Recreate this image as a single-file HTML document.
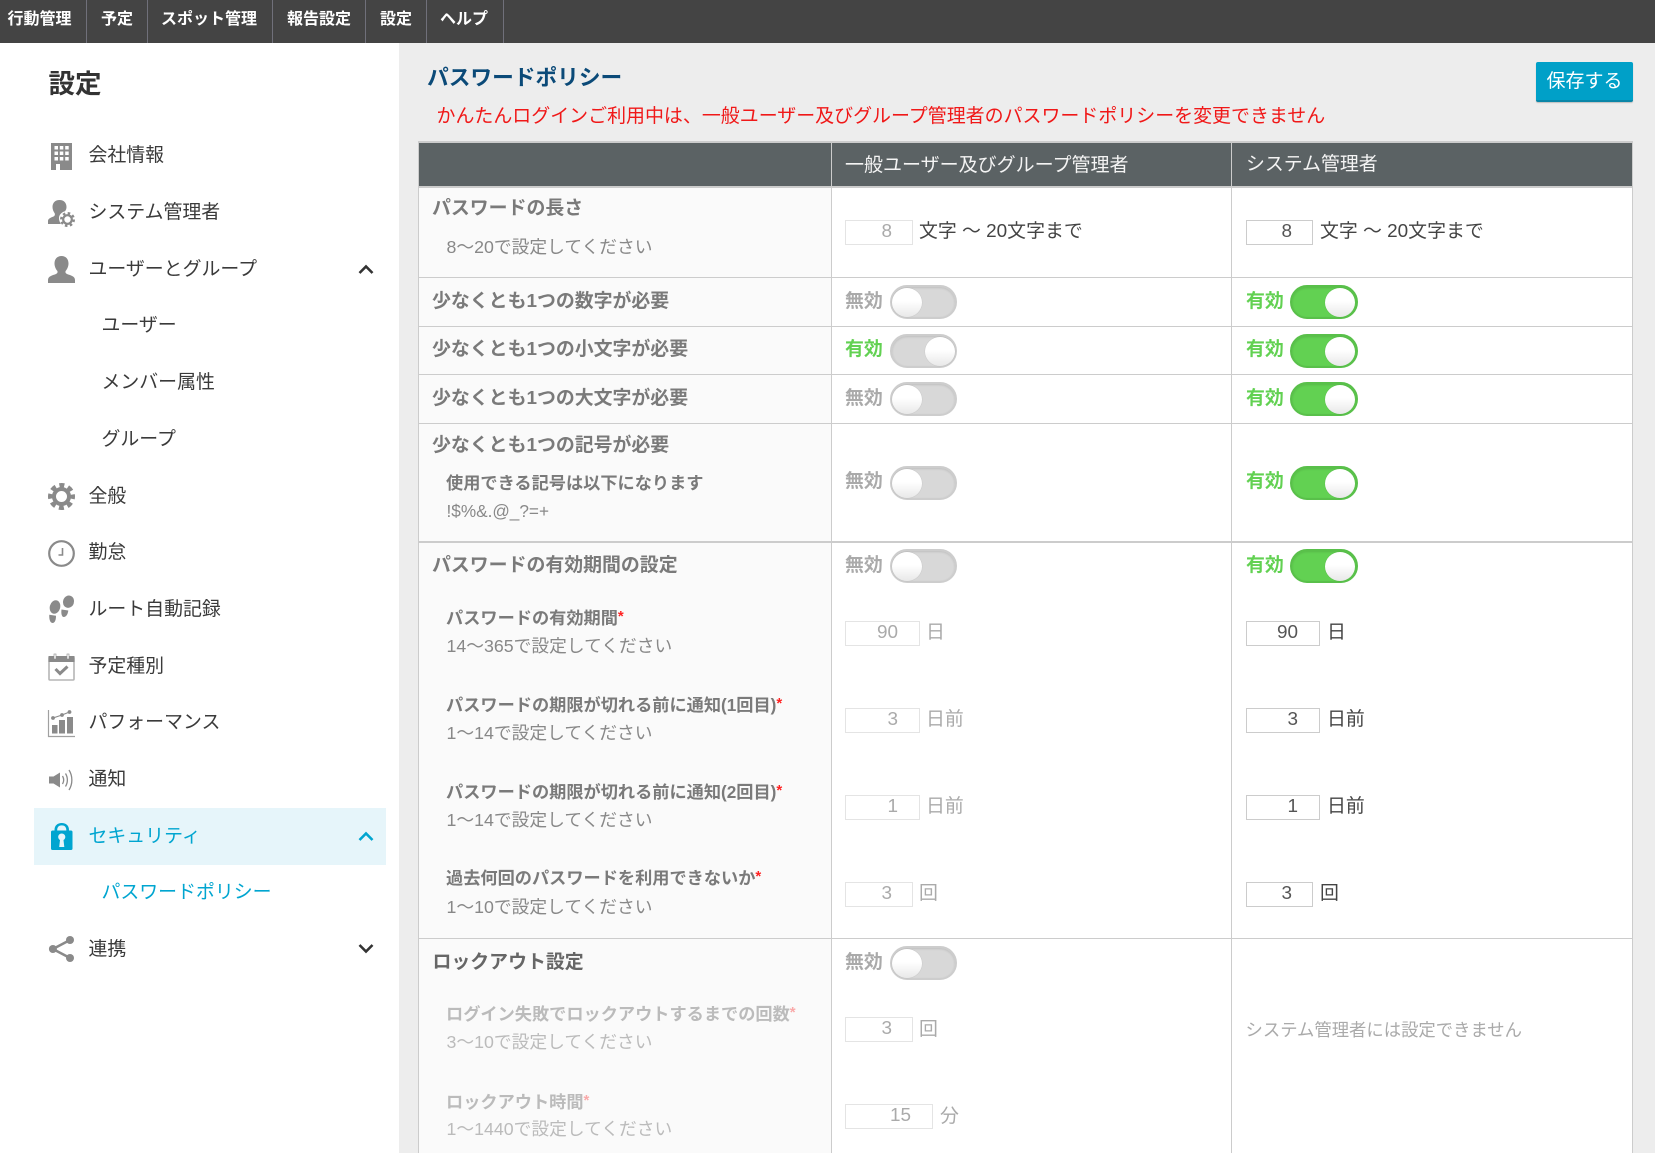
<!DOCTYPE html>
<html lang="ja"><head><meta charset="utf-8"><title>パスワードポリシー</title>
<style>
html,body{margin:0;padding:0;width:1655px;height:1153px;overflow:hidden;background:#ededed}
body{position:relative;font-family:"Liberation Sans","Noto Sans CJK JP",sans-serif;color:#333}
.t{position:absolute;white-space:nowrap;line-height:1;font-size:18.9px;transform:translateY(2px)}
.b{position:absolute}
.n{color:#fff;font-weight:700;font-size:16px;top:11px;transform:translateY(1px)}
.m{font-size:18.9px;color:#3a3a3a;left:88.500px}
.s{left:101.500px}
.l{font-weight:700;color:#7a7a7a;left:432px}
.h{font-weight:700;color:#7a7a7a;left:446px;font-size:17.2px;transform:translateY(1px)}
.d{color:#888;left:446.500px;font-size:17.75px;transform:none}
.off{color:#bbb!important}
.h i{color:#f22;font-style:normal;font-size:15px;position:relative;top:-3px}
.h.off i{color:#f9a9a9}
.v{font-weight:700;color:#aaa}
.g{font-weight:700;color:#62d152}
.u{color:#444}
.ud{color:#aaa}
.in{position:absolute;box-sizing:border-box;height:25px;background:#fff;border:1px solid #ccc;color:#555;font-size:18.9px;line-height:22px;text-align:right;font-family:"Liberation Sans",sans-serif}
.in.x{border:1px solid #e4e4e4;color:#aaa}
.tg{position:absolute;box-sizing:border-box;width:67px;height:34px;border-radius:17px;background:#d8d8d8;border:2px solid #cdcdcd;box-shadow:inset 0 1px 2px rgba(0,0,0,.12)}
.tg.on{width:68px;background:#62d152;border-color:#59c04a}
.tg b{position:absolute;display:block;width:30px;height:29px;top:.5px;left:0;border-radius:50%;background:linear-gradient(#fff 45%,#e8e8e8);box-shadow:0 0 1px rgba(0,0,0,.2)}
.tg.r b{left:33px}
svg{position:absolute;overflow:visible}
</style></head><body>

<!-- top bar -->
<div class="b" style="left:0;top:0;width:1655px;height:43px;background:#444"></div>
<div class="b" style="left:86px;top:0;width:1px;height:43px;background:#70707a"></div>
<div class="b" style="left:147px;top:0;width:1px;height:43px;background:#70707a"></div>
<div class="b" style="left:272px;top:0;width:1px;height:43px;background:#70707a"></div>
<div class="b" style="left:365px;top:0;width:1px;height:43px;background:#70707a"></div>
<div class="b" style="left:426px;top:0;width:1px;height:43px;background:#70707a"></div>
<div class="b" style="left:503px;top:0;width:1px;height:43px;background:#70707a"></div>
<div class="t n" style="left:7.500px">行動管理</div>
<div class="t n" style="left:101px">予定</div>
<div class="t n" style="left:161px">スポット管理</div>
<div class="t n" style="left:287px">報告設定</div>
<div class="t n" style="left:380px">設定</div>
<div class="t n" style="left:440px">ヘルプ</div>

<!-- sidebar -->
<div class="b" style="left:0;top:43px;width:399px;height:1110px;background:#fff"></div>
<div class="t" style="left:48.500px;top:69px;font-size:26.500px;font-weight:700;color:#333">設定</div>
<div class="b" style="left:34px;top:808px;width:352px;height:57px;background:#e6f5fa"></div>

<div class="t m" style="top:145px">会社情報</div>
<div class="t m" style="top:202px">システム管理者</div>
<div class="t m" style="top:259px">ユーザーとグループ</div>
<div class="t m s" style="top:315px">ユーザー</div>
<div class="t m s" style="top:372px">メンバー属性</div>
<div class="t m s" style="top:429px">グループ</div>
<div class="t m" style="top:486px">全般</div>
<div class="t m" style="top:542px">勤怠</div>
<div class="t m" style="top:599px">ルート自動記録</div>
<div class="t m" style="top:656px">予定種別</div>
<div class="t m" style="top:712px">パフォーマンス</div>
<div class="t m" style="top:769px">通知</div>
<div class="t m" style="top:826px;color:#00a5d0">セキュリティ</div>
<div class="t m s" style="top:882px;color:#00a5d0">パスワードポリシー</div>
<div class="t m" style="top:939px">連携</div>

<!-- sidebar icons -->
<svg style="left:51px;top:143px" width="21" height="27" viewBox="0 0 21 27"><path fill="#8a8a8a" fill-rule="evenodd" d="M0 0H21V27H9V21H5V27H0ZM3.500 3V6.500H7V3ZM8.800 3V6.500H12.300V3ZM14.200 3V6.500H17.700V3ZM3.500 8.500V12H7V8.500ZM8.800 8.500V12H12.300V8.500ZM14.200 8.500V12H17.700V8.500ZM3.500 14V17.500H7V14ZM8.800 14V17.500H12.300V14ZM14.200 14V17.500H17.700V14Z"/></svg>

<svg style="left:48px;top:200px" width="27" height="27" viewBox="0 0 27 27"><path fill="#8a8a8a" d="M11.500 0C16 0 18.500 3 18.500 7C18.500 8.500 18 10 17 11.200C13.500 12 11 15 11 18C11 20 11.500 22 13 24H0V21C0 18.500 3 17.500 5.500 16.500C7 15.800 7 14.500 6.800 13.500C5.500 11.500 4.500 9.500 4.500 7C4.500 3 7 0 11.500 0Z"/><g fill="none" stroke="#8a8a8a"><circle cx="19.500" cy="19.500" r="4.300" stroke-width="2.200"/><circle cx="19.500" cy="19.500" r="6.300" stroke-width="2.400" stroke-dasharray="2.500 2.450"/></g></svg>

<svg style="left:48px;top:256px" width="27" height="27" viewBox="0 0 27 27"><path fill="#8a8a8a" d="M13.500 0C18 0 20.500 3.200 20.500 7.500C20.500 10.500 19.200 13 17.800 14.800C17 16 17.500 17.300 19 18C22 19.300 27 20 27 24V27H0V24C0 20 5 19.300 8 18C9.500 17.300 10 16 9.200 14.800C7.800 13 6.500 10.500 6.500 7.500C6.500 3.200 9 0 13.500 0Z"/></svg>

<svg style="left:358px;top:263px" width="16" height="12" viewBox="0 0 16 12"><path d="M1.500 10L8 3.500L14.500 10" fill="none" stroke="#333" stroke-width="2.600"/></svg>

<svg style="left:48px;top:483px" width="27" height="27" viewBox="0 0 27 27"><g fill="none" stroke="#8a8a8a"><circle cx="13.500" cy="13.500" r="7.500" stroke-width="4"/><circle cx="13.500" cy="13.500" r="11.300" stroke-width="4.400" stroke-dasharray="5 3.875" stroke-dashoffset="2.500"/></g></svg>

<svg style="left:48px;top:540px" width="27" height="27" viewBox="0 0 27 27"><circle cx="13.500" cy="13.500" r="12.300" fill="none" stroke="#8a8a8a" stroke-width="2.200"/><path d="M14.500 8V15H10.500" fill="none" stroke="#8a8a8a" stroke-width="1.600"/></svg>

<svg style="left:49px;top:596px" width="26" height="27" viewBox="0 0 26 27"><g fill="#8a8a8a"><ellipse cx="6" cy="11" rx="5.200" ry="6.800" transform="rotate(15 6 11)"/><path d="M.3 18.800L7 19.800C7 24 6 27 3.500 27C1 27 0 23 .3 18.800Z"/><ellipse cx="19.500" cy="5.700" rx="5.500" ry="6.200" transform="rotate(20 19.500 5.700)"/><path d="M12.500 13.500L19.300 14.500C18.800 18.500 17 21 14.800 21C12.500 21 12 17 12.500 13.500Z"/></g></svg>

<svg style="left:48px;top:654px" width="27" height="27" viewBox="0 0 27 27"><rect x="1" y="3" width="25" height="23" rx="1" fill="#fff" stroke="#b5b5b5" stroke-width="1.600"/><rect x="0.500" y="2" width="26" height="6" fill="#8a8a8a"/><rect x="6" y="0" width="2" height="5" fill="#fff" stroke="#8a8a8a" stroke-width=".6"/><rect x="19" y="0" width="2" height="5" fill="#fff" stroke="#8a8a8a" stroke-width=".6"/><path d="M7.500 15L12 19.500L19.500 12.500" fill="none" stroke="#8a8a8a" stroke-width="3"/></svg>

<svg style="left:48px;top:710px" width="27" height="27" viewBox="0 0 27 27"><path d="M.5 0V26.500H27" fill="none" stroke="#a0a0a0" stroke-width="1.200"/><g fill="#8a8a8a"><rect x="4" y="15" width="5.500" height="8.500"/><rect x="11" y="10" width="6" height="13.500"/><rect x="19" y="7" width="6" height="16.500"/><circle cx="5" cy="8" r="1.900"/><circle cx="14" cy="5" r="1.900"/><circle cx="21.500" cy="2" r="1.900"/></g><path d="M5 8L14 5L21.500 2" fill="none" stroke="#8a8a8a" stroke-width="1.100"/></svg>

<svg style="left:49px;top:769px" width="25" height="22" viewBox="0 0 25 22"><path fill="#8a8a8a" d="M0 7.500H4.500L11 3.500V18.500L4.500 14.500H0Z"/><g fill="none" stroke="#8a8a8a" stroke-width="1.300"><path d="M13.500 7C15 9.500 15 12.500 13.500 15"/><path d="M16.500 4.500C19 8.500 19 13.500 16.500 17.500"/><path d="M20 1C23.800 7 23.800 15 20 21"/></g></svg>

<svg style="left:51px;top:823px" width="22" height="27" viewBox="0 0 22 27"><path fill="#00a5d0" fill-rule="evenodd" d="M3.500 7.500V7C3.500 2.500 6.500 0 10.700 0C15 0 18 2.500 18 7V7.500H20C21 7.500 21.500 8.200 21.500 9V25.500C21.500 26.400 21 27 20 27H1.500C.6 27 0 26.400 0 25.500V9C0 8.200 .6 7.500 1.500 7.500ZM6.200 7.500H15.300V7C15.300 4 13.500 2.400 10.700 2.400C8 2.400 6.200 4 6.200 7ZM10.700 10.500C8.700 10.500 7.200 12 7.200 14C7.200 15.300 7.900 16.400 9 17L8.200 24H13.300L12.500 17C13.600 16.400 14.300 15.300 14.300 14C14.300 12 12.700 10.500 10.700 10.500Z"/></svg>
<svg style="left:358px;top:830px" width="16" height="12" viewBox="0 0 16 12"><path d="M1.500 10L8 3.500L14.500 10" fill="none" stroke="#00a5d0" stroke-width="2.600"/></svg>

<svg style="left:49px;top:936px" width="25" height="26" viewBox="0 0 25 26"><g fill="#8a8a8a"><circle cx="3.900" cy="13" r="4"/><circle cx="21" cy="4" r="4"/><circle cx="21" cy="22" r="4"/></g><path d="M3.900 13L21 4M3.900 13L21 22" stroke="#8a8a8a" stroke-width="2.500"/></svg>
<svg style="left:358px;top:943px" width="16" height="12" viewBox="0 0 16 12"><path d="M1.500 2L8 8.500L14.500 2" fill="none" stroke="#333" stroke-width="2.600"/></svg>

<!-- main header -->
<div class="t" style="left:427px;top:64.500px;font-size:21.700px;font-weight:700;color:#0b4a78">パスワードポリシー</div>
<div class="t" style="left:436.500px;top:106px;font-size:18.970px;color:#f01818">かんたんログインご利用中は、一般ユーザー及びグループ管理者のパスワードポリシーを変更できません</div>
<div class="b" style="left:1536px;top:62px;width:97px;height:40px;box-sizing:border-box;background:#00a0c8;border-radius:2px;border-bottom:2px solid #0a86a8;box-shadow:0 1px 1px rgba(0,0,0,.2);color:#fff;font-size:19px;line-height:39px;text-align:center">保存する</div>

<!-- table -->
<div class="b" style="left:418px;top:141px;width:1215px;height:1012px;background:#fff"></div>
<div class="b" style="left:418px;top:188px;width:413px;height:965px;background:#fafafa"></div>
<div class="b" style="left:418px;top:143px;width:1214px;height:43px;background:#5b6264"></div>
<div class="b" style="left:418px;top:141px;width:1215px;height:2px;background:#ccc"></div>
<div class="b" style="left:418px;top:186px;width:1215px;height:2px;background:#ccc"></div>
<div class="b" style="left:418px;top:277px;width:1215px;height:1px;background:#ccc"></div>
<div class="b" style="left:418px;top:326px;width:1215px;height:1px;background:#ccc"></div>
<div class="b" style="left:418px;top:374px;width:1215px;height:1px;background:#ccc"></div>
<div class="b" style="left:418px;top:423px;width:1215px;height:1px;background:#ccc"></div>
<div class="b" style="left:418px;top:541px;width:1215px;height:2px;background:#ccc"></div>
<div class="b" style="left:418px;top:938px;width:1215px;height:1px;background:#ccc"></div>
<div class="b" style="left:418px;top:141px;width:1px;height:1012px;background:#ccc"></div>
<div class="b" style="left:831px;top:143px;width:1px;height:1010px;background:#ccc"></div>
<div class="b" style="left:1231px;top:143px;width:1px;height:1010px;background:#ccc"></div>
<div class="b" style="left:1632px;top:141px;width:1px;height:1012px;background:#ccc"></div>

<div class="t" style="left:845px;top:154px;font-size:19px;color:#f4f4f4">一般ユーザー及びグループ管理者</div>
<div class="t" style="left:1246px;top:154px;color:#f4f4f4">システム管理者</div>

<!-- row 1 -->
<div class="t l" style="top:198px">パスワードの長さ</div>
<div class="t d" style="top:238.500px">8～20で設定してください</div>
<div class="in x" style="left:845px;top:220px;width:68px;padding-right:20px">8</div>
<div class="t u" style="left:919px;top:221px">文字 ～ 20文字まで</div>
<div class="in" style="left:1246px;top:220px;width:67px;padding-right:20px">8</div>
<div class="t u" style="left:1320px;top:221px">文字 ～ 20文字まで</div>

<!-- row 2 -->
<div class="t l" style="top:291px">少なくとも1つの数字が必要</div>
<div class="t v" style="left:845px;top:291px">無効</div><div class="tg" style="left:890px;top:285px"><b></b></div>
<div class="t g" style="left:1246px;top:291px">有効</div><div class="tg on r" style="left:1290px;top:285px"><b></b></div>

<!-- row 3 -->
<div class="t l" style="top:339px">少なくとも1つの小文字が必要</div>
<div class="t g" style="left:845px;top:339px">有効</div><div class="tg r" style="left:890px;top:334px"><b></b></div>
<div class="t g" style="left:1246px;top:339px">有効</div><div class="tg on r" style="left:1290px;top:334px"><b></b></div>

<!-- row 4 -->
<div class="t l" style="top:388px">少なくとも1つの大文字が必要</div>
<div class="t v" style="left:845px;top:388px">無効</div><div class="tg" style="left:890px;top:382px"><b></b></div>
<div class="t g" style="left:1246px;top:388px">有効</div><div class="tg on r" style="left:1290px;top:382px"><b></b></div>

<!-- row 5 -->
<div class="t l" style="top:435px">少なくとも1つの記号が必要</div>
<div class="t h" style="top:474px">使用できる記号は以下になります</div>
<div class="t d" style="top:503px;font-size:17.2px">!$%&amp;.@_?=+</div>
<div class="t v" style="left:845px;top:471px">無効</div><div class="tg" style="left:890px;top:466px"><b></b></div>
<div class="t g" style="left:1246px;top:471px">有効</div><div class="tg on r" style="left:1290px;top:466px"><b></b></div>

<!-- row 6 -->
<div class="t l" style="top:555px">パスワードの有効期間の設定</div>
<div class="t v" style="left:845px;top:555px">無効</div><div class="tg" style="left:890px;top:549px"><b></b></div>
<div class="t g" style="left:1246px;top:555px">有効</div><div class="tg on r" style="left:1290px;top:549px"><b></b></div>

<div class="t h" style="top:609px">パスワードの有効期間<i>*</i></div>
<div class="t d" style="top:638px">14～365で設定してください</div>
<div class="in x" style="left:845px;top:621px;width:75px;padding-right:21px">90</div>
<div class="t ud" style="left:926px;top:622px">日</div>
<div class="in" style="left:1246px;top:621px;width:74px;padding-right:21px">90</div>
<div class="t u" style="left:1327px;top:622px">日</div>

<div class="t h" style="top:696px">パスワードの期限が切れる前に通知(1回目)<i>*</i></div>
<div class="t d" style="top:725px">1～14で設定してください</div>
<div class="in x" style="left:845px;top:708px;width:75px;padding-right:21px">3</div>
<div class="t ud" style="left:926px;top:709px">日前</div>
<div class="in" style="left:1246px;top:708px;width:74px;padding-right:21px">3</div>
<div class="t u" style="left:1327px;top:709px">日前</div>

<div class="t h" style="top:783px">パスワードの期限が切れる前に通知(2回目)<i>*</i></div>
<div class="t d" style="top:812px">1～14で設定してください</div>
<div class="in x" style="left:845px;top:795px;width:75px;padding-right:21px">1</div>
<div class="t ud" style="left:926px;top:796px">日前</div>
<div class="in" style="left:1246px;top:795px;width:74px;padding-right:21px">1</div>
<div class="t u" style="left:1327px;top:796px">日前</div>

<div class="t h" style="top:869px">過去何回のパスワードを利用できないか<i>*</i></div>
<div class="t d" style="top:898.500px">1～10で設定してください</div>
<div class="in x" style="left:845px;top:882px;width:68px;padding-right:20px">3</div>
<div class="t ud" style="left:919px;top:883px">回</div>
<div class="in" style="left:1246px;top:882px;width:67px;padding-right:20px">3</div>
<div class="t u" style="left:1320px;top:883px">回</div>

<!-- row 7 -->
<div class="t l" style="top:952px;left:432.500px;color:#666">ロックアウト設定</div>
<div class="t v" style="left:845px;top:952px">無効</div><div class="tg" style="left:890px;top:946px"><b></b></div>

<div class="t h off" style="top:1005px">ログイン失敗でロックアウトするまでの回数<i>*</i></div>
<div class="t d off" style="top:1033.500px">3～10で設定してください</div>
<div class="in x" style="left:845px;top:1017px;width:68px;padding-right:20px">3</div>
<div class="t ud" style="left:919px;top:1019px">回</div>
<div class="t" style="left:1245.500px;top:1020px;font-size:17.350px;color:#aaa">システム管理者には設定できません</div>

<div class="t h off" style="top:1092.500px">ロックアウト時間<i>*</i></div>
<div class="t d off" style="top:1120.500px">1～1440で設定してください</div>
<div class="in x" style="left:845px;top:1104px;width:88px;padding-right:21px">15</div>
<div class="t ud" style="left:940px;top:1106px">分</div>

</body></html>
